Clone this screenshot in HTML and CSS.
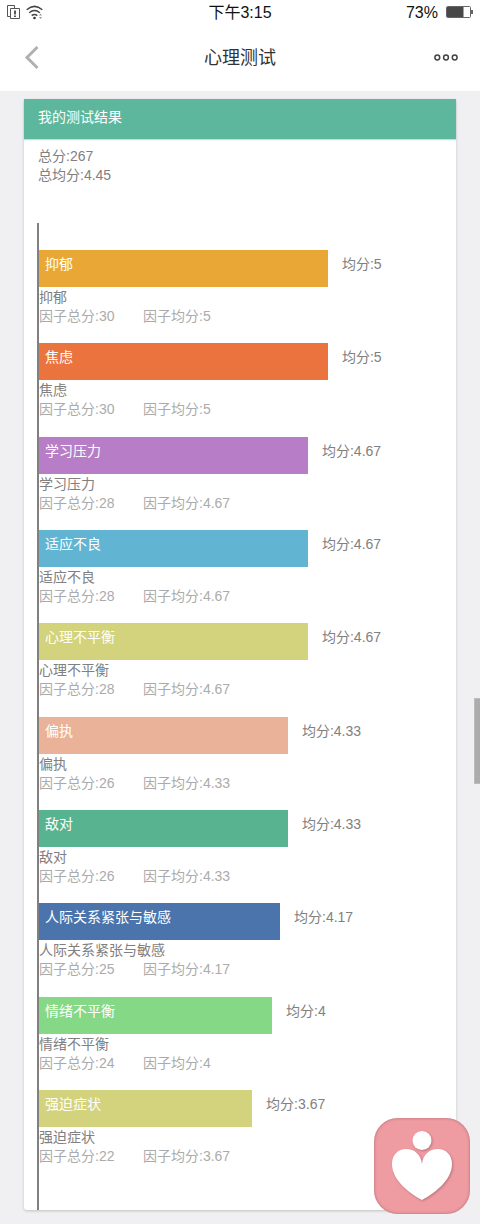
FILE: index.html
```html
<!DOCTYPE html>
<html lang="zh-CN">
<head>
<meta charset="utf-8">
<meta name="viewport" content="width=device-width, initial-scale=1">
<title>心理测试</title>
<link rel="stylesheet" href="styles.css">
</head>
<body>
<header class="top">
  <div class="status">
    <div class="status-left">
      <svg width="13" height="15" viewBox="0 0 13 15" fill="none" stroke="#555" stroke-width="1"><path d="M3 11.500H.5V.5h7V3M3.500 3.500h9v10h-9z"/><path d="M8 5.500v4M8 10.500V12" stroke="#222" stroke-width="1.500"/></svg>
      <svg width="18" height="15" viewBox="0 0 18 15" fill="none" stroke="#444" stroke-width="1.500"><path d="M.7 4.700Q8.500-2 16.300 4.700M3.200 7.800q5.300-4.500 10.600 0M5.700 10.700q2.800-2.300 5.600 0"/><circle cx="8.500" cy="13" r="1.300" fill="#333" stroke="none"/><path d="M13 10.500l1.500-2 1.500 2zM13 12l1.500 2 1.500-2z" fill="#999" stroke="none"/></svg>
    </div>
    <time class="clock">下午3:15</time>
    <div class="status-right">
      <span>73%</span>
      <svg width="27" height="12" viewBox="0 0 27 12"><rect x=".5" y=".5" width="24" height="11" rx="1" fill="#fff" stroke="#666"/><rect x="1" y="1" width="16.500" height="10" fill="#484848"/><path d="M25 4h2v4h-2z" fill="#666"/></svg>
    </div>
  </div>
  <nav class="nav">
    <button class="icon-button back" type="button" aria-label="返回"><svg width="18" height="24" viewBox="0 0 18 24" fill="none" stroke="#b0b0b2" stroke-width="3"><path d="M15.500 1L5 11.500 15.500 22"/></svg></button>
    <h1 class="title">心理测试</h1>
    <button class="icon-button more" type="button" aria-label="更多"><svg width="24" height="8" viewBox="0 0 24 8" fill="none" stroke="#444" stroke-width="1.500"><circle cx="3.300" cy="3.500" r="2.400"/><circle cx="12" cy="3.500" r="2.400"/><circle cx="20.700" cy="3.500" r="2.400"/></svg></button>
  </nav>
</header>

<main class="page">
  <section class="card">
    <h2 class="card-head">我的测试结果</h2>
    <div class="summary">
      <p>总分:267</p>
      <p>总均分:4.45</p>
    </div>
    <ul class="chart">
      <li><div class="row"><div class="bar amber" style="width:69.3%">抑郁</div><span class="score">均分:5</span></div><p class="name">抑郁</p><p class="detail"><span>因子总分:30</span><span>因子均分:5</span></p></li>
      <li><div class="row"><div class="bar orange" style="width:69.3%">焦虑</div><span class="score">均分:5</span></div><p class="name">焦虑</p><p class="detail"><span>因子总分:30</span><span>因子均分:5</span></p></li>
      <li><div class="row"><div class="bar purple" style="width:64.5%">学习压力</div><span class="score">均分:4.67</span></div><p class="name">学习压力</p><p class="detail"><span>因子总分:28</span><span>因子均分:4.67</span></p></li>
      <li><div class="row"><div class="bar sky" style="width:64.5%">适应不良</div><span class="score">均分:4.67</span></div><p class="name">适应不良</p><p class="detail"><span>因子总分:28</span><span>因子均分:4.67</span></p></li>
      <li><div class="row"><div class="bar olive" style="width:64.5%">心理不平衡</div><span class="score">均分:4.67</span></div><p class="name">心理不平衡</p><p class="detail"><span>因子总分:28</span><span>因子均分:4.67</span></p></li>
      <li><div class="row"><div class="bar peach" style="width:59.7%">偏执</div><span class="score">均分:4.33</span></div><p class="name">偏执</p><p class="detail"><span>因子总分:26</span><span>因子均分:4.33</span></p></li>
      <li><div class="row"><div class="bar teal" style="width:59.7%">敌对</div><span class="score">均分:4.33</span></div><p class="name">敌对</p><p class="detail"><span>因子总分:26</span><span>因子均分:4.33</span></p></li>
      <li><div class="row"><div class="bar blue" style="width:57.8%">人际关系紧张与敏感</div><span class="score">均分:4.17</span></div><p class="name">人际关系紧张与敏感</p><p class="detail"><span>因子总分:25</span><span>因子均分:4.17</span></p></li>
      <li><div class="row"><div class="bar green" style="width:55.9%">情绪不平衡</div><span class="score">均分:4</span></div><p class="name">情绪不平衡</p><p class="detail"><span>因子总分:24</span><span>因子均分:4</span></p></li>
      <li><div class="row"><div class="bar olive" style="width:51.1%">强迫症状</div><span class="score">均分:3.67</span></div><p class="name">强迫症状</p><p class="detail"><span>因子总分:22</span><span>因子均分:3.67</span></p></li>
    </ul>
  </section>
</main>

<div class="scroll-thumb"></div>
<button class="app-button" type="button" aria-label="心理助手">
  <svg class="app-icon" viewBox="0 0 96 96"><circle cx="48" cy="22.500" r="9.500" fill="#fff"/><path d="M48 82C37 76 18 63 18 46c0-9 6-15 14-15 9 0 15 6 16 15 1-9 7-15 16-15 8 0 14 6 14 15 0 17-19 30-30 36z" fill="#fff"/></svg>
</button>
</body>
</html>
```
FILE: styles.css
```css
* { box-sizing: border-box; }

body {
  margin: 0;
  min-height: 100vh;
  display: flex;
  flex-direction: column;
  background: #f0f0f2;
  color: #808080;
  font: 14px/19px "Liberation Sans", "Noto Sans CJK SC", sans-serif;
}

h1, h2, p, ul { margin: 0; padding: 0; font-weight: 400; }
button { padding: 0; border: 0; background: none; cursor: pointer; }
svg { display: block; }

.top { background: #fff; color: #111; }

.status,
.nav {
  display: grid;
  grid-template-columns: 1fr auto 1fr;
  align-items: center;
}
.status { height: 24px; padding: 0 7px; font-size: 16px; }
.status-left { display: flex; align-items: center; gap: 6px; }
.status-right { display: flex; align-items: center; justify-content: flex-end; gap: 8px; }

.nav { height: 67px; padding: 0 22px; }
.title { font-size: 18px; line-height: 24px; color: #333; }
.icon-button { display: flex; align-items: center; height: 40px; }
.more { justify-self: end; }

.page { flex: 1; display: flex; padding: 8px 24px 14px; }
.card {
  flex: 1;
  display: flex;
  flex-direction: column;
  background: #fff;
  border-radius: 3px;
  box-shadow: 0 1px 3px rgba(0, 0, 0, .2);
}
.card-head {
  height: 40px;
  padding: 8px 14px;
  background: #5db79c;
  box-shadow: 0 1px 1px rgba(93, 183, 156, .4);
  color: #fff;
  font-size: 14px;
  line-height: 20px;
}
.summary { padding: 8px 14px 38px; }

.chart {
  flex: 1;
  display: flex;
  flex-direction: column;
  justify-content: space-between;
  gap: 17px;
  margin-left: 13px;
  padding: 27px 0 44px;
  border-left: 2px solid #808080;
  list-style: none;
}
.row { display: flex; gap: 14px; margin-bottom: 1px; line-height: 29px; }
.bar { height: 37px; padding-left: 6px; color: #fff; white-space: nowrap; }
.score { white-space: nowrap; }
.detail { display: flex; color: #ababab; }
.detail span { min-width: 104px; }

.amber { background: #e9a836; }
.orange { background: #ea733e; }
.purple { background: #b77dc6; }
.sky { background: #61b5d3; }
.olive { background: #d2d37c; }
.peach { background: #eab298; }
.teal { background: #58b490; }
.blue { background: #4b74ac; }
.green { background: #85d886; }

.scroll-thumb {
  position: fixed;
  top: 57%;
  right: 0;
  width: 6px;
  height: 86px;
  border: 1px solid #bcbcbc;
  border-right: 0;
  background: #acacac;
}
.app-button {
  position: fixed;
  right: 10px;
  bottom: 10px;
  width: 96px;
  height: 96px;
  border-radius: 24px;
  background: #ee9ba1;
  box-shadow: inset 0 0 3px #a86a70;
}
.app-icon { width: 100%; filter: drop-shadow(1px 1px 1px #b8757b); }
```
